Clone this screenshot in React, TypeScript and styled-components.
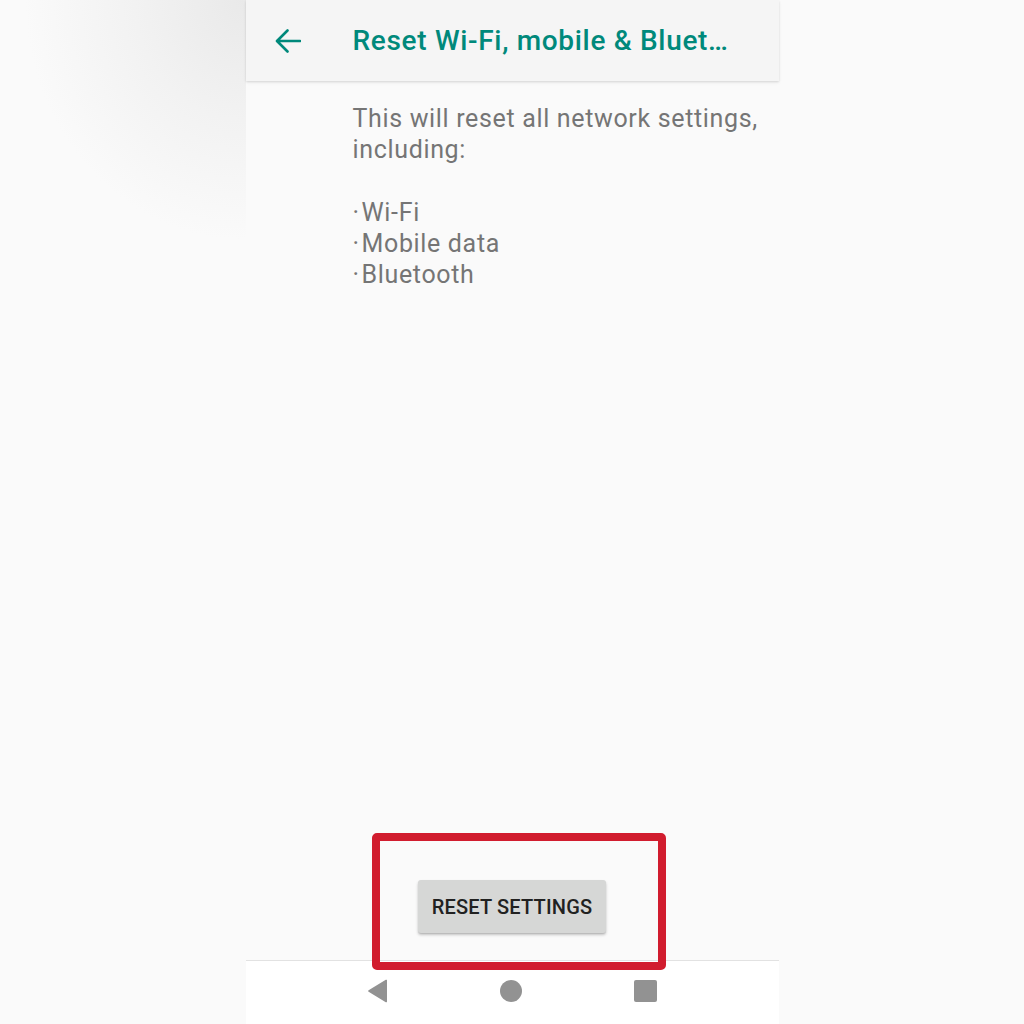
import React from "react";
import styled, { createGlobalStyle } from "styled-components";

const GlobalStyle = createGlobalStyle`
  html, body {
    margin: 0;
    padding: 0;
    background: #fafafa;
  }
  body {
    font-family: Roboto, "Noto Sans", "Liberation Sans", sans-serif;
  }
`;

const Page = styled.div`
  width: 1024px;
  height: 1024px;
  display: flex;
  justify-content: center;
  overflow: hidden;
  background:
    radial-gradient(ellipse 220px 240px at 245px 0px, #e9e9e9 0%, #f2f2f2 50%, rgba(250, 250, 250, 0) 100%),
    #fafafa;
`;

const Phone = styled.div`
  position: relative;
  width: 533px;
  height: 1024px;
  display: flex;
  flex-direction: column;
  background: #fafafa;
`;

const Toolbar = styled.header`
  height: 81px;
  flex: none;
  display: flex;
  align-items: center;
  background: #f5f5f5;
  box-shadow: 0 1px 2px rgba(0, 0, 0, 0.12), 0 2px 4px rgba(0, 0, 0, 0.04);
  position: relative;
  z-index: 1;
`;

const BackButton = styled.div`
  width: 107px;
  flex: none;
  display: flex;
  align-items: center;
  padding-left: 29px;
  box-sizing: border-box;
  color: #00897b;
`;

const Title = styled.h1`
  margin: 0;
  font-size: 28px;
  font-weight: 500;
  color: #00897b;
  white-space: nowrap;
  letter-spacing: 0.68px;
`;

const Content = styled.main`
  flex: 1;
  padding: 22px 10px 0 107px;
`;

const Description = styled.p`
  margin: 0;
  font-size: 25px;
  line-height: 31.2px;
  letter-spacing: 0.66px;
  color: #757575;
  white-space: pre-line;
`;

const Bullet = styled.span`
  display: inline-block;
  width: 9px;
`;

const ButtonArea = styled.div`
  display: flex;
  justify-content: center;
  padding-bottom: 27px;
`;

const ActionButton = styled.button`
  width: 188px;
  height: 53px;
  border: none;
  border-radius: 3px;
  background: #d6d7d6;
  box-shadow: 0 2px 3px rgba(0, 0, 0, 0.22), 0 1px 1px rgba(0, 0, 0, 0.08);
  font-family: Roboto, "Liberation Sans", sans-serif;
  font-size: 20px;
  font-weight: 500;
  color: #212121;
  letter-spacing: 0.2px;
  padding: 0;
`;

const NavBar = styled.nav`
  height: 64px;
  flex: none;
  background: #ffffff;
  border-top: 1px solid #e2e2e2;
  box-sizing: border-box;
  display: flex;
  justify-content: center;
  align-items: center;
  gap: 112px;
  padding-bottom: 3px;
`;

const Highlight = styled.div`
  position: absolute;
  left: 126px;
  top: 833px;
  width: 294px;
  height: 137px;
  box-sizing: border-box;
  border: 8px solid #d11c2e;
  border-radius: 5px;
  pointer-events: none;
`;

const NavIcon = styled.svg`
  display: block;
  fill: #929292;
`;

const items = ["Wi-Fi", "Mobile data", "Bluetooth"];

export default function App() {
  return (
    <>
      <GlobalStyle />
      <Page>
        <Phone>
          <Toolbar>
            <BackButton>
              <svg width="26" height="24" viewBox="0 0 26 24" fill="none">
                <path
                  d="M25 12H2.5M12.5 1.5L2 12l10.5 10.5"
                  stroke="#00897b"
                  strokeWidth="2.6"
                  strokeLinecap="round"
                  strokeLinejoin="round"
                />
              </svg>
            </BackButton>
            <Title>Reset Wi-Fi, mobile &amp; Bluet…</Title>
          </Toolbar>
          <Content>
            <Description>
              {"This will reset all network settings,\nincluding:\n\n"}
              {items.map((item, i) => (
                <React.Fragment key={item}>
                  <Bullet>·</Bullet>
                  {item}
                  {i < items.length - 1 ? "\n" : ""}
                </React.Fragment>
              ))}
            </Description>
          </Content>
          <ButtonArea>
            <ActionButton>RESET SETTINGS</ActionButton>
          </ButtonArea>
          <NavBar>
            <NavIcon width="21" height="24" viewBox="0 0 21 24">
              <path d="M20 1.5v21a0.8 0.8 0 0 1-1.2 0.7L1.6 12.7a0.8 0.8 0 0 1 0-1.4L18.8 0.8A0.8 0.8 0 0 1 20 1.5z" />
            </NavIcon>
            <NavIcon width="22" height="22" viewBox="0 0 22 22">
              <circle cx="11" cy="11" r="11" />
            </NavIcon>
            <NavIcon width="23" height="22" viewBox="0 0 23 22">
              <rect x="0" y="0" width="23" height="22" rx="2" />
            </NavIcon>
          </NavBar>
          <Highlight />
        </Phone>
      </Page>
    </>
  );
}
